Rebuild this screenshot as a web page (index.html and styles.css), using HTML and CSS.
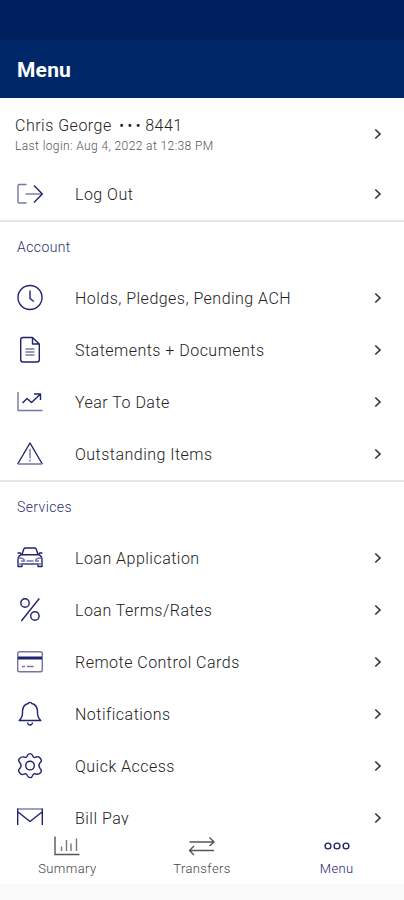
FILE: index.html
```html
<!DOCTYPE html>
<html lang="en">
<head>
    <meta charset="UTF-8">
    <meta name="viewport" content="width=device-width, initial-scale=1.0">
    <title>Menu</title>
    <link rel="stylesheet" href="styles.css">
</head>
<body>
    <svg class="sprite">
        <symbol id="chevron" viewBox="0 0 8 12">
            <path d="M1.3 1.5 L6 6 L1.3 10.5"></path>
        </symbol>
    </svg>

    <div class="status-bar"></div>
    <header class="app-header">
        <h1>Menu</h1>
    </header>

    <main class="menu">
        <section class="group">
            <a class="profile">
                <div class="profile-info">
                    <div class="profile-name">Chris George <span class="dots">•••</span>8441</div>
                    <div class="last-login">Last login: Aug 4, 2022 at 12:38 PM</div>
                </div>
                <svg class="chevron"><use href="#chevron"></use></svg>
            </a>
            <a class="row">
                <svg class="icon" viewBox="0 0 28 28">
                    <path class="soft" d="M10.5 4.5 H3.5 Q2 4.5 2 6 V21.5 Q2 23 3.5 23 H10.5"></path>
                    <path class="soft" d="M9.5 14 H26"></path>
                    <path d="M18 5.5 L26.3 14 L18 22.5"></path>
                </svg>
                <span class="label">Log Out</span>
                <svg class="chevron"><use href="#chevron"></use></svg>
            </a>
        </section>

        <section class="group">
            <h2>Account</h2>
            <a class="row">
                <svg class="icon" viewBox="0 0 28 28">
                    <circle cx="14" cy="13.5" r="12"></circle>
                    <path d="M14 6.5 V14.5 L17.8 17.5"></path>
                </svg>
                <span class="label">Holds, Pledges, Pending ACH</span>
                <svg class="chevron"><use href="#chevron"></use></svg>
            </a>
            <a class="row">
                <svg class="icon" viewBox="0 0 28 28">
                    <path d="M16.5 1.5 H7 Q4.7 1.5 4.7 4 V23.5 Q4.7 26 7 26 H21 Q23.3 26 23.3 23.5 V8 L16.5 1.5 V8 H23.3"></path>
                    <path class="soft" d="M9.5 13 H18.5 M9.5 16 H18.5 M9.5 19 H18.5"></path>
                </svg>
                <span class="label">Statements + Documents</span>
                <svg class="chevron"><use href="#chevron"></use></svg>
            </a>
            <a class="row">
                <svg class="icon" viewBox="0 0 28 28">
                    <path class="soft" d="M2 4 V22.5 H26.5"></path>
                    <path d="M6.5 15 L11 10.5 L15.5 14.5 L24 6.5 M18 6 H24.5 V12"></path>
                </svg>
                <span class="label">Year To Date</span>
                <svg class="chevron"><use href="#chevron"></use></svg>
            </a>
            <a class="row">
                <svg class="icon" viewBox="0 0 28 28">
                    <path d="M1.7 24 L14 3 L26.3 24"></path>
                    <path class="soft" d="M1.7 24 H26.3 M14 9 V18.3 M14 19.5 V21.6"></path>
                </svg>
                <span class="label">Outstanding Items</span>
                <svg class="chevron"><use href="#chevron"></use></svg>
            </a>
        </section>

        <section class="group">
            <h2>Services</h2>
            <a class="row">
                <svg class="icon" viewBox="0 0 28 28">
                    <path d="M6 10.5 L7.8 5 Q8.3 4 9.5 4 H18.5 Q19.7 4 20.2 5 L22 10.5"></path>
                    <path d="M1.5 9 H4.5 L5.5 10.8 H22.5 L23.5 9 H26.5 M5 11 Q2 12 2 16 V22.5 H6 V20 H22 V22.5 H26 V16 Q26 12 23 11"></path>
                    <path class="soft" d="M2.5 14 Q8 13.5 8.5 17 H5 M25.5 14 Q20 13.5 19.5 17 H23 M10.5 17 H17.5 M2 20 H26"></path>
                </svg>
                <span class="label">Loan Application</span>
                <svg class="chevron"><use href="#chevron"></use></svg>
            </a>
            <a class="row">
                <svg class="icon" viewBox="0 0 28 28">
                    <circle cx="9" cy="7" r="4.2"></circle>
                    <circle cx="18.9" cy="20" r="4.2"></circle>
                    <path d="M23.3 2.5 L5.3 25"></path>
                </svg>
                <span class="label">Loan Terms/Rates</span>
                <svg class="chevron"><use href="#chevron"></use></svg>
            </a>
            <a class="row">
                <svg class="icon" viewBox="0 0 28 28">
                    <rect class="soft" x="1.7" y="3.7" width="24.6" height="20" rx="1.8"></rect>
                    <path class="stripe" d="M2 10 H26"></path>
                    <path class="soft" d="M6 18.5 H9 M11 18.5 H17.5"></path>
                </svg>
                <span class="label">Remote Control Cards</span>
                <svg class="chevron"><use href="#chevron"></use></svg>
            </a>
            <a class="row">
                <svg class="icon" viewBox="0 0 28 28">
                    <path d="M3.2 20.5 Q6.5 17.5 6.5 13 V11 Q7 4.5 12.2 3.5 Q14 1.3 15.8 3.5 Q21 4.5 21.5 11 V13 Q21.5 17.5 24.8 20.5 Z"></path>
                    <path d="M11.5 22.5 Q11.8 25 14 25 T16.5 22.5"></path>
                </svg>
                <span class="label">Notifications</span>
                <svg class="chevron"><use href="#chevron"></use></svg>
            </a>
            <a class="row">
                <svg class="icon" viewBox="0 0 28 28">
                    <path d="M11.3 3.8 Q12 1.6 14 1.6 T16.7 3.8 Q17.5 6.3 20 5 Q22.7 3.8 24.5 6.5 T24.3 10.5 Q21.5 13.6 24.3 16.7 Q26.3 18.7 24.5 20.7 T20 22.2 Q17.5 20.9 16.7 23.4 T14 25.6 T11.3 23.4 Q10.5 20.9 8 22.2 Q5.3 23.4 3.5 20.7 T3.7 16.7 Q6.5 13.6 3.7 10.5 Q1.7 8.5 3.5 6.5 T8 5 Q10.5 6.3 11.3 3.8 Z"></path>
                    <circle cx="14" cy="13.6" r="4.3"></circle>
                </svg>
                <span class="label">Quick Access</span>
                <svg class="chevron"><use href="#chevron"></use></svg>
            </a>
            <a class="row">
                <svg class="icon" viewBox="0 0 28 28">
                    <path class="soft" d="M1.7 5 H26.3"></path>
                    <path d="M1.7 24 V4.5 M26.3 4.5 V24 H1.7 M2 8 L14 17.5 L26 8"></path>
                </svg>
                <span class="label">Bill Pay</span>
                <svg class="chevron"><use href="#chevron"></use></svg>
            </a>
        </section>
    </main>

    <nav class="tab-bar">
        <a class="tab">
            <svg class="tab-icon" viewBox="0 0 28 22">
                <path d="M2 1.5 V19.5 H26.5"></path>
                <path class="soft" d="M8.5 11.5 V16 M13.5 5 V16 M18 8.5 V16 M23.5 3.5 V16"></path>
            </svg>
            <span>Summary</span>
        </a>
        <a class="tab">
            <svg class="tab-icon" viewBox="0 0 28 22">
                <path d="M1.5 7 H26 M21.5 2.5 L26 7 L21.5 11"></path>
                <path d="M26 15.5 H1.5 M6 11 L1.5 15.5 L6 20"></path>
            </svg>
            <span>Transfers</span>
        </a>
        <a class="tab active">
            <svg class="tab-icon" viewBox="0 0 28 22">
                <circle cx="5" cy="11" r="2.9"></circle>
                <circle cx="14" cy="11" r="2.9"></circle>
                <circle cx="23" cy="11" r="2.9"></circle>
            </svg>
            <span>Menu</span>
        </a>
    </nav>
</body>
</html>
```
FILE: styles.css
```css
* {
    box-sizing: border-box;
}

body {
    font-family: Roboto, sans-serif;
    background-color: #fafafa;
    color: #222;
    margin: 0;
    height: 900px;
    display: flex;
    flex-direction: column;
    overflow: hidden;
}

.sprite {
    display: none;
}

.status-bar {
    height: 40px;
    background-color: #001f5f;
    flex-shrink: 0;
}

.app-header {
    height: 58px;
    background-color: #002868;
    display: flex;
    align-items: center;
    padding: 2px 17px 0;
    flex-shrink: 0;
}

h1 {
    font-size: 21px;
    font-weight: 700;
    letter-spacing: 0.2px;
    color: white;
    margin: 0;
}

.menu {
    height: 727px;
    background-color: white;
    overflow: hidden;
    flex-shrink: 0;
}

.group + .group {
    border-top: 2px solid #e6e6e6;
}

.profile {
    height: 70px;
    display: flex;
    align-items: center;
    padding: 1px 22px 0 15px;
}

.profile-info {
    flex: 1;
    padding-top: 5px;
}

.profile-name {
    font-size: 16px;
    line-height: 20px;
    font-weight: 300;
    letter-spacing: 0.5px;
}

.dots {
    font-size: 14px;
    font-weight: 400;
    letter-spacing: 3.6px;
    margin-left: 3px;
    margin-right: 1px;
}

.last-login {
    font-size: 12px;
    line-height: 20px;
    font-weight: 300;
    letter-spacing: 0.4px;
    color: #555;
}

h2 {
    height: 50px;
    margin: 0;
    padding-left: 17px;
    font-size: 14px;
    line-height: 50px;
    font-weight: 300;
    letter-spacing: 0.4px;
    color: #2c3070;
}

.row {
    height: 52px;
    display: flex;
    align-items: center;
    padding: 0 22px 0 16px;
}

.icon {
    width: 28px;
    height: 28px;
    margin-right: 31px;
    fill: none;
    stroke: #20236f;
    stroke-width: 1.4;
    stroke-linejoin: round;
}

.icon .soft {
    stroke: #7477a6;
}

.icon .stripe {
    stroke-width: 3;
}

.label {
    flex: 1;
    font-size: 16px;
    line-height: 20px;
    padding-top: 1px;
    font-weight: 300;
    letter-spacing: 0.48px;
}

.chevron {
    width: 8px;
    height: 12px;
    fill: none;
    stroke: #3a3a3a;
    stroke-width: 1.7;
}

.tab-bar {
    height: 59px;
    background-color: white;
    display: flex;
    flex-shrink: 0;
}

.tab {
    flex: 1;
    display: flex;
    flex-direction: column;
    align-items: center;
    padding-top: 10px;
    font-size: 13px;
    line-height: 16px;
    font-weight: 300;
    letter-spacing: 0.4px;
    color: #444;
}

.tab-icon {
    width: 28px;
    height: 22px;
    margin-bottom: 4px;
    fill: none;
    stroke: #555;
    stroke-width: 1.4;
}

.tab-icon .soft {
    stroke: #777;
}

.active {
    color: #20236f;
}

.active .tab-icon {
    stroke: #20236f;
}
```
